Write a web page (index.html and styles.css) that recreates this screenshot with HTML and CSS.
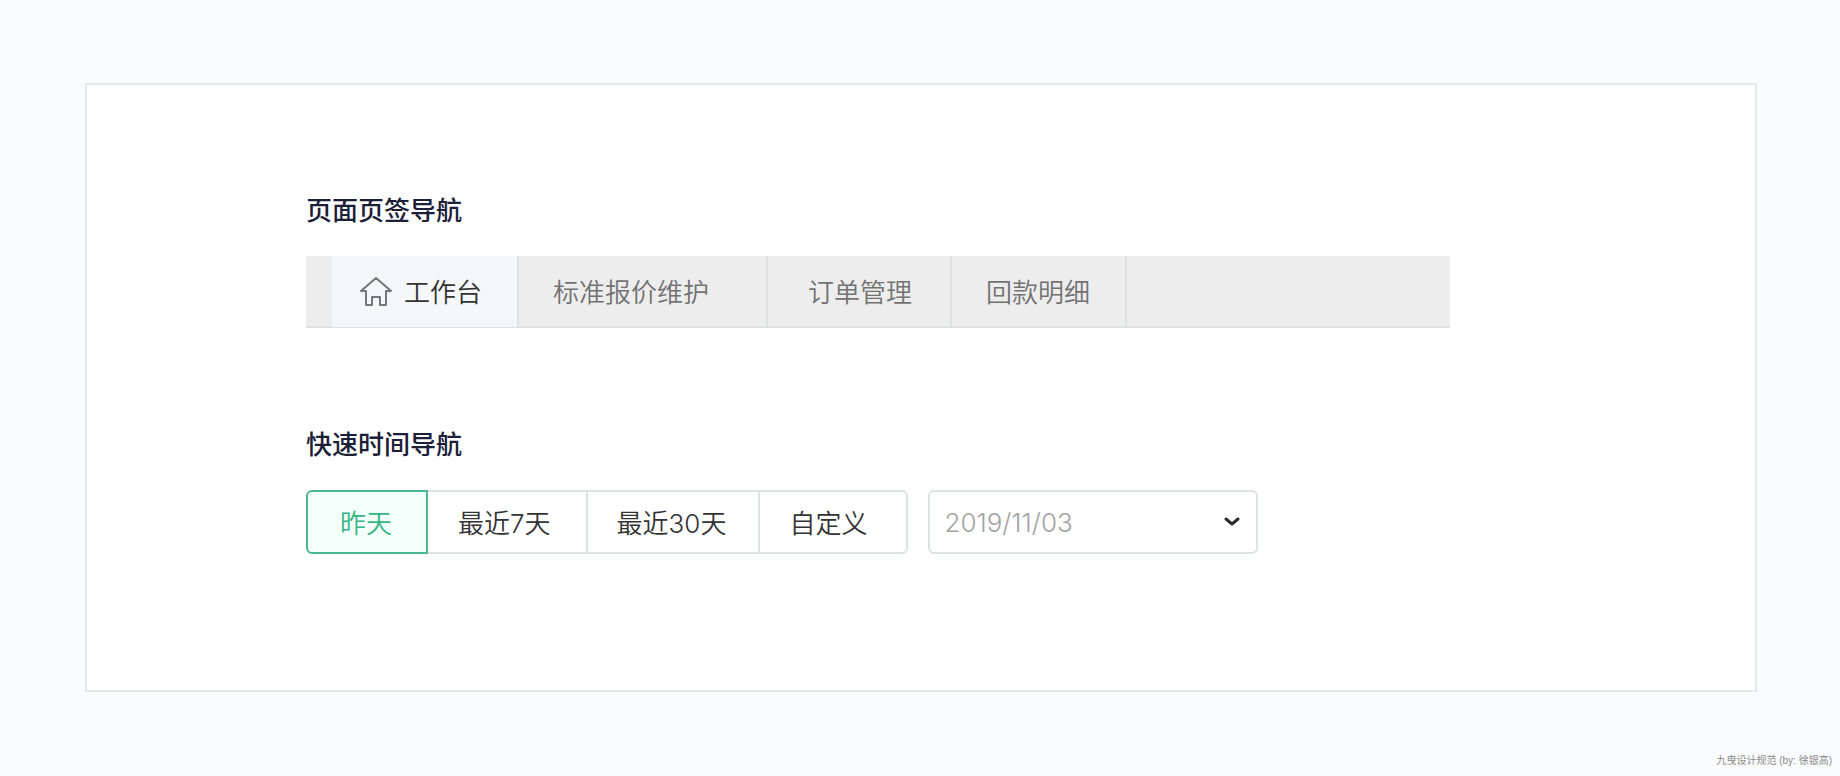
FILE: index.html
```html
<!DOCTYPE html>
<html lang="zh-CN">
<head>
	<meta charset="UTF-8">
	<meta name="viewport" content="width=device-width, initial-scale=1.0">
	<title>导航</title>
	<link rel="stylesheet" href="styles.css">
</head>
<body>
	<main class="card">
		<section class="block">
			<h2>页面页签导航</h2>
			<nav class="tabs">
				<a class="tab active" href="#home">
					<svg class="icon-home" viewBox="0 0 32 30" aria-hidden="true">
						<path d="M16 2 L1 15 H6 V29 H12 V21 H20 V29 H26 V15 H31 Z"/>
					</svg>
					工作台
				</a>
				<a class="tab tab-closable" href="#price">标准报价维护</a>
				<a class="tab tab-wide" href="#order">订单管理</a>
				<a class="tab" href="#payment">回款明细</a>
			</nav>
		</section>

		<section class="block">
			<h2>快速时间导航</h2>
			<div class="filter">
				<div class="btn-group">
					<button type="button" class="active">昨天</button>
					<button type="button" class="week">最近7天</button>
					<button type="button">最近30天</button>
					<button type="button">自定义</button>
				</div>
				<div class="date">
					<select aria-label="日期">
						<option>2019/11/03</option>
					</select>
					<svg class="icon-arrow" viewBox="0 0 16 10" aria-hidden="true">
						<path d="M2 2 L8 7 L14 2"/>
					</svg>
				</div>
			</div>
		</section>
	</main>
	<footer>九曳设计规范 (by: 徐银高)</footer>
</body>
</html>
```

FILE: styles.css
```css
* {
	box-sizing: border-box;
}
body {
	margin: 0;
	padding: 83px 83px 0 85px;
	background-color: #f9fbfc;
	color: #333;
	font-family: Inter, "Noto Sans CJK SC", sans-serif;
	font-size: 26px;
}
.card {
	padding: 106px 305px 136px 219px;
	background-color: white;
	border: 2px solid #e6e9eb;
}
.block + .block {
	margin-top: 97px;
}
h2 {
	margin: 0 0 25px;
	font-size: 26px;
	line-height: 40px;
	font-weight: 500;
	color: #1b2038;
}

/* page tabs */
.tabs {
	display: flex;
	height: 72px;
	padding-left: 26px;
	background-color: #ededed;
	border-bottom: 2px solid #dfe0e0;
}
.tab {
	display: flex;
	align-items: center;
	height: 70px;
	padding: 0 35px 2px 34px;
	border-right: 2px solid #dfe1e2;
	color: #727272;
	font-weight: 350;
	text-decoration: none;
	white-space: nowrap;
}
.tab.active {
	height: 71px;
	gap: 12px;
	padding-left: 28px;
	background-color: #f4f6f8;
	color: #333;
}
.tab-closable {
	padding-right: 57px;
}
.tab-wide {
	padding: 0 38px 2px 40px;
}
.icon-home {
	width: 32px;
	height: 30px;
	fill: none;
	stroke: #777;
	stroke-width: 2;
	stroke-linejoin: round;
}

/* quick time range */
.filter {
	display: flex;
	gap: 20px;
}
.btn-group {
	display: flex;
}
.btn-group button {
	height: 64px;
	padding: 0 32px 2px 29px;
	background-color: white;
	border: 2px solid #dfe2e2;
	border-left: none;
	color: #333;
	font: inherit;
	font-weight: 350;
	white-space: nowrap;
}
.btn-group button.active {
	padding: 0 34px 2px 32px;
	background-color: #f2fffa;
	border: 2px solid #4bb78e;
	border-radius: 6px 0 0 6px;
	color: #36b584;
}
.btn-group .week {
	padding: 0 35px 2px 30px;
}
.btn-group button:last-child {
	padding-right: 39px;
	border-radius: 0 6px 6px 0;
}
.date {
	position: relative;
	flex: 0 1 330px;
}
.date select {
	width: 100%;
	height: 64px;
	padding: 0 48px 0 14px;
	appearance: none;
	background-color: white;
	border: 2px solid #dfe2e2;
	border-radius: 6px;
	color: #a3a3a3;
	font: inherit;
	font-weight: 300;
}
.icon-arrow {
	position: absolute;
	right: 18px;
	top: 27px;
	width: 16px;
	height: 10px;
	fill: none;
	stroke: #2b2d33;
	stroke-width: 3;
	stroke-linecap: round;
	stroke-linejoin: round;
	pointer-events: none;
}

footer {
	margin: 61px -75px 0 0;
	font-family: "Liberation Sans", "Noto Sans CJK SC", sans-serif;
	font-size: 10px;
	line-height: 16px;
	color: #8a8a8a;
	text-align: right;
}
```
